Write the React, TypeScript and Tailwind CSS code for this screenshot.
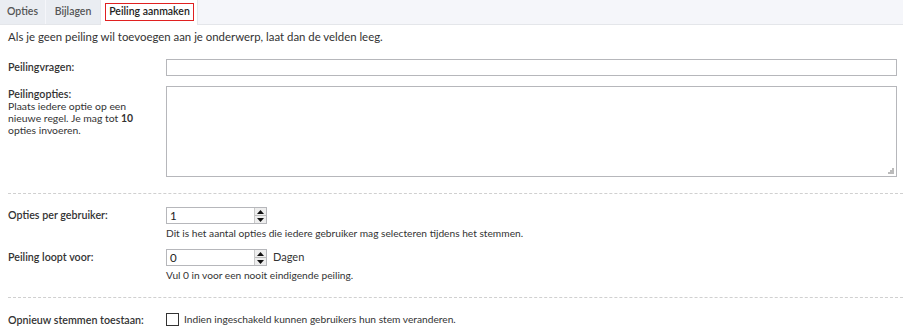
import React from 'react';

const font = { fontFamily: 'Lato, "Open Sans", sans-serif' };

function Spinner() {
  return (
    <div className="flex flex-col w-[12px] h-[15px] border-l border-[#c9c9c9]">
      <div className="flex-1 flex items-center justify-center bg-[#eeeeee] border-b border-[#bdbdbd]">
        <svg width="7" height="4" viewBox="0 0 7 4"><path d="M3.5 0 L7 4 L0 4 Z" fill="#111" /></svg>
      </div>
      <div className="flex-1 flex items-center justify-center bg-[#eeeeee]">
        <svg width="7" height="4" viewBox="0 0 7 4"><path d="M0 0 L7 0 L3.5 4 Z" fill="#111" /></svg>
      </div>
    </div>
  );
}

function NumberBox({ value }: { value: string }) {
  return (
    <div className="flex items-center w-[101px] h-[17px] border border-[#b6b7bb] bg-white pl-[3px]">
      <span className="flex-1 text-[11.5px] leading-none text-[#222]">{value}</span>
      <Spinner />
    </div>
  );
}

export default function App() {
  return (
    <div className="w-[903px] h-[335px] bg-white text-[#333] text-[11.4px] overflow-hidden" style={font}>
      {/* Tabs */}
      <div className="flex items-end h-[25px] bg-[#f5f6fa] border-b border-[#e4e6ea]">
        <div className="flex h-full w-[45px] justify-center items-center bg-[#eaedf2] text-[10.5px] font-semibold text-[#555]">Opties</div>
        <div className="flex h-full w-[54px] ml-px justify-center items-center bg-[#eaedf2] text-[10.5px] font-semibold text-[#555]">Bijlagen</div>
        <div className="flex h-[25px] -mb-px items-start pt-[3px] pl-[4px] pr-[3px] bg-white border-x border-[#e4e6ea]">
          <div className="w-[89px] h-[18px] flex items-center justify-center border border-[#e02020] text-[10.5px] font-semibold text-[#222]">Peiling aanmaken</div>
        </div>
      </div>

      <div className="pl-[8px]">
        <p className="mt-[4px] leading-[15px]">Als je geen peiling wil toevoegen aan je onderwerp, laat dan de velden leeg.</p>

        <div className="flex mt-[15px]">
          <div className="w-[158px] pt-[1px] font-semibold text-[10.7px] leading-[14px]">Peilingvragen:</div>
          <div className="w-[731px] h-[17px] border border-[#b6b7bb]"></div>
        </div>

        <div className="flex mt-[10px]">
          <div className="w-[158px] pt-[1px] leading-[12px] text-[10.4px]">
            <div className="font-semibold text-[10.7px] leading-[13px]">Peilingopties:</div>
            <div className="w-[134px]">
              Plaats iedere optie op een nieuwe regel. Je mag tot <span className="font-bold">10</span> opties invoeren.
            </div>
          </div>
          <div className="relative w-[731px] h-[91px] border border-[#b6b7bb]">
            <svg className="absolute right-[2px] bottom-[2px]" width="7" height="7" viewBox="0 0 7 7">
              <rect x="5" y="1" width="2" height="2" fill="#bbb" />
              <rect x="3" y="3" width="2" height="2" fill="#bbb" />
              <rect x="5" y="3" width="2" height="2" fill="#bbb" />
              <rect x="1" y="5" width="2" height="2" fill="#bbb" />
              <rect x="3" y="5" width="2" height="2" fill="#bbb" />
              <rect x="5" y="5" width="2" height="2" fill="#bbb" />
            </svg>
          </div>
        </div>

        <div className="mt-[16px] border-t border-dashed border-[#d0d0d0]"></div>

        <div className="flex mt-[13px]">
          <div className="w-[158px] pt-[1px] font-semibold text-[10.7px] leading-[14px]">Opties per gebruiker:</div>
          <div className="flex flex-col">
            <NumberBox value="1" />
            <div className="mt-[2px] text-[10.2px] leading-[14px]">Dit is het aantal opties die iedere gebruiker mag selecteren tijdens het stemmen.</div>
          </div>
        </div>

        <div className="flex mt-[9px]">
          <div className="w-[158px] pt-[1px] font-semibold text-[10.7px] leading-[14px]">Peiling loopt voor:</div>
          <div className="flex flex-col">
            <div className="flex items-center gap-[6px]">
              <NumberBox value="0" />
              <span className="text-[11px]">Dagen</span>
            </div>
            <div className="mt-[2px] text-[10.2px] leading-[14px]">Vul 0 in voor een nooit eindigende peiling.</div>
          </div>
        </div>

        <div className="mt-[15px] border-t border-dashed border-[#d0d0d0]"></div>

        <div className="flex mt-[14px] items-center">
          <div className="w-[158px] font-semibold text-[10.7px] leading-[14px]">Opnieuw stemmen toestaan:</div>
          <div className="w-[13px] h-[13px] border border-[#333] bg-white"></div>
          <span className="ml-[5px] text-[10.2px]">Indien ingeschakeld kunnen gebruikers hun stem veranderen.</span>
        </div>
      </div>
    </div>
  );
}
